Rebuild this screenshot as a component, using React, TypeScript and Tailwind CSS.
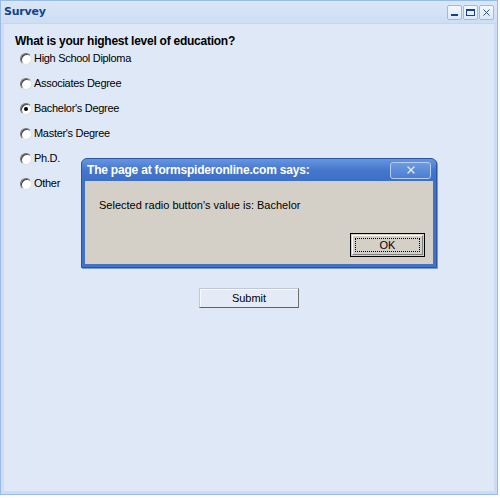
import { X } from 'lucide-react'

const options = [
  { label: 'High School Diploma', checked: false },
  { label: 'Associates Degree', checked: false },
  { label: "Bachelor's Degree", checked: true },
  { label: "Master's Degree", checked: false },
  { label: 'Ph.D.', checked: false },
  { label: 'Other', checked: false },
]

function Radio({ checked }: { checked: boolean }) {
  return (
    <span className="w-[12px] h-[12px] rounded-full border border-t-[#707070] border-l-[#707070] border-r-[#e0e0e0] border-b-[#e0e0e0] bg-white flex items-center justify-center shadow-[inset_1px_1px_0_#404040]">
      {checked && <span className="w-[4px] h-[4px] rounded-full bg-black" />}
    </span>
  )
}

function TitleButton({ kind }: { kind: 'min' | 'max' | 'close' }) {
  return (
    <div className="w-[15px] h-[15px] rounded-[2px] border border-[#99bbe8] bg-gradient-to-b from-[#f4f8fd] to-[#dde8f7] flex items-center justify-center">
      {kind === 'min' && <span className="w-[7px] h-[2px] bg-[#15428b] mt-[5px]" />}
      {kind === 'max' && <span className="w-[9px] h-[7px] border border-t-[2px] border-[#15428b]" />}
      {kind === 'close' && <X size={11} strokeWidth={2} className="text-[#15428b]" />}
    </div>
  )
}

export default function App() {
  return (
    <div className="w-[500px] h-[498px] bg-white font-['Liberation_Sans',Arial,sans-serif] relative overflow-hidden">
      <div className="w-[498px] h-[495px] border border-[#99bbe8] bg-[#dfe8f6] flex flex-col">
        <div className="h-[23px] flex items-center justify-between pl-[3px] pr-[3px] bg-gradient-to-b from-[#dae7f6] to-[#cddef3] border-b border-[#c5d6ee]">
          <span className="text-[11px] font-bold text-[#15428b] font-['DejaVu_Sans',Verdana,sans-serif] tracking-[-0.2px]">
            Survey
          </span>
          <div className="flex gap-[1px]">
            <TitleButton kind="min" />
            <TitleButton kind="max" />
            <TitleButton kind="close" />
          </div>
        </div>

        <div className="flex-1 flex flex-col pl-[14px] pt-[9px] border-x-[3px] border-b-[3px] border-[#cddcf0]">
          <div className="text-[12px] font-bold text-black leading-[16px] -ml-[3px] tracking-[-0.25px]">
            What is your highest level of education?
          </div>
          <div className="flex flex-col -mt-[3px] ml-[2px]">
            {options.map((o) => (
              <div key={o.label} className="h-[25px] flex items-center gap-[2px]">
                <Radio checked={o.checked} />
                <span className="text-[11px] text-black tracking-[-0.3px]">{o.label}</span>
              </div>
            ))}
          </div>
          <div className="flex mt-[92px] ml-[181px]">
            <button className="w-[100px] h-[20px] bg-[#e4ebf6] border border-t-[#c0c8d8] border-l-[#c0c8d8] border-r-[#707070] border-b-[#606060] shadow-[inset_1px_1px_0_#f6f8fc] text-[11px] text-black">
              Submit
            </button>
          </div>
        </div>
      </div>

      <div className="absolute left-[81px] top-[158px] w-[356px] h-[110px] rounded-t-[6px] bg-[#4272c6] border border-[#2a55a5] flex flex-col shadow-[1px_1px_0_#7a9bd0]">
        <div className="h-[22px] flex items-center justify-between pl-[5px] pr-[5px] bg-gradient-to-b from-[#6795e0] via-[#4677cc] to-[#3d6fc6] rounded-t-[5px]">
          <span className="text-[12px] font-bold text-white tracking-[-0.2px]">
            The page at formspideronline.com says:
          </span>
          <div className="w-[41px] h-[17px] rounded-[3px] border border-[#b9cdef] bg-gradient-to-b from-[#6d9be2] to-[#4b7dd2] flex items-center justify-center">
            <X size={12} strokeWidth={2.5} className="text-[#e8eef8]" />
          </div>
        </div>
        <div className="flex-1 mx-[3px] mb-[3px] bg-[#d4d0c8] flex flex-col">
          <div className="text-[11px] text-black pl-[14px] pt-[16px]">
            Selected radio button's value is: Bachelor
          </div>
          <div className="flex justify-end mt-auto mb-[7px] mr-[8px]">
            <button className="w-[75px] h-[24px] border border-black bg-[#d4d0c8] p-[1px]">
              <div className="w-full h-full border border-t-white border-l-white border-r-[#808080] border-b-[#808080] p-[2px]">
                <div className="w-full h-full border border-dotted border-black flex items-center justify-center text-[11px] text-black">
                  OK
                </div>
              </div>
            </button>
          </div>
        </div>
      </div>
    </div>
  )
}
